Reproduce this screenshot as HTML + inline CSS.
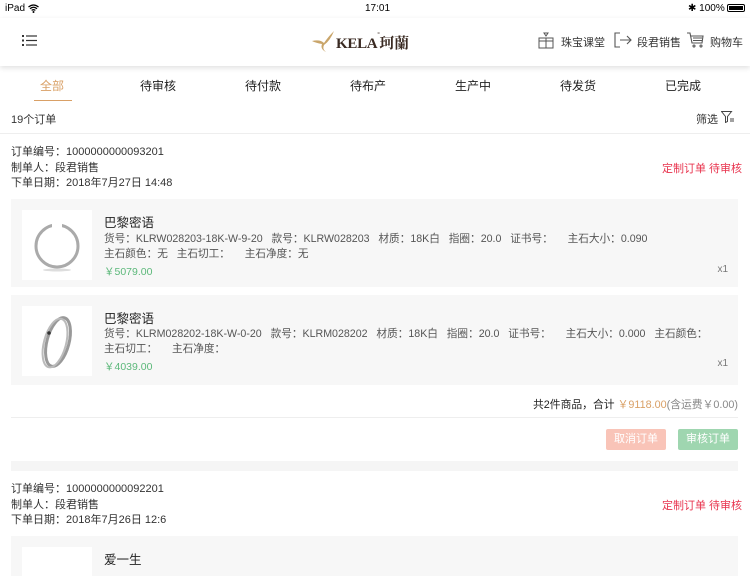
<!DOCTYPE html>
<html><head><meta charset="utf-8"><style>
*{margin:0;padding:0;box-sizing:border-box}
body{width:750px;height:563px;overflow:hidden;background:#fff;font-family:"Liberation Sans","Noto Sans CJK SC",sans-serif;color:#222;position:relative}
.a{position:absolute;white-space:nowrap}
.s{font-size:11px;color:#333}
.card{position:absolute;left:11px;width:727px;background:#f7f7f7}
.img{position:absolute;left:11px;top:11px;width:70px;height:70px;background:#fff}
.t{position:absolute;left:93px;font-size:12.5px;color:#222}
.d{position:absolute;left:93px;font-size:10.65px;color:#555}
.p{position:absolute;left:93px;font-size:10.5px;color:#5cb87a}
</style></head><body>
<div class="a" style="left:5px;top:3px;font-size:10px;color:#000">iPad</div>
<svg class="a" style="left:28px;top:4px" width="11" height="9" viewBox="0 0 11 9"><path d="M0.5 3Q5.5-1 10.5 3M2 4.7Q5.5 1.8 9 4.7M3.6 6.4Q5.5 5 7.4 6.4" stroke="#000" stroke-width="1.3" fill="none"/><circle cx="5.5" cy="8" r="1" fill="#000"/></svg>
<div class="a" style="left:365px;top:3px;font-size:10px;color:#000">17:01</div>
<div class="a" style="left:688px;top:3px;font-size:10px;color:#000">✱ 100%</div>
<div class="a" style="left:727px;top:4px;width:18px;height:8px;border:1px solid #000;border-radius:2px;padding:1px"><div style="width:100%;height:100%;background:#000"></div></div>
<div class="a" style="left:0;top:18px;width:750px;height:48px;background:#fff;box-shadow:0 2px 5px rgba(0,0,0,.12)"></div>
<svg class="a" style="left:22px;top:35px" width="15" height="11" viewBox="0 0 15 11"><g fill="#333"><rect x="0" y="0" width="2" height="2"/><rect x="0" y="4.5" width="2" height="2"/><rect x="0" y="9" width="2" height="2"/><rect x="4" y="0.4" width="11" height="1.2"/><rect x="4" y="4.9" width="11" height="1.2"/><rect x="4" y="9.4" width="11" height="1.2"/></g></svg>
<svg class="a" style="left:310px;top:29px" width="26" height="24" viewBox="0 0 26 24"><path d="M2 12Q10 10 14 14Q18 8 24 2Q20 12 14 16Q12 20 16 23Q10 20 12 15Q6 14 2 12Z" fill="#c9a56a"/></svg>
<div class="a" style="left:336px;top:32px;font-family:'Liberation Serif','Noto Serif CJK SC',serif;font-size:15px;color:#3a2a22;font-weight:bold;letter-spacing:-.3px">KELA<span style="font-size:6px;vertical-align:top">°</span>珂蘭</div>
<svg class="a" style="left:538px;top:32px" width="16" height="17" viewBox="0 0 16 17" fill="none" stroke="#555" stroke-width="1"><path d="M1 6h14v10H1zM8 6v10M1 9h14"/><path d="M6 1h4l-2 3z"/></svg>
<div class="a s" style="left:561px;top:34px">珠宝课堂</div>
<svg class="a" style="left:614px;top:32px" width="18" height="16" viewBox="0 0 18 16" fill="none" stroke="#555" stroke-width="1.1"><path d="M6 1H1v14h5M6 8h11M13 4l4 4-4 4"/></svg>
<div class="a s" style="left:637px;top:34px">段君销售</div>
<svg class="a" style="left:687px;top:32px" width="17" height="16" viewBox="0 0 17 16" fill="none" stroke="#555" stroke-width="1.1"><path d="M0 1h3l2 10h10l1-7H4M6 6h9M6 8.5h9"/><circle cx="7" cy="14" r="1"/><circle cx="14" cy="14" r="1"/></svg>
<div class="a s" style="left:710px;top:34px">购物车</div>

<div class="a" style="top:77px;left:40px;font-size:12px;color:#d9a066">全部</div>
<div class="a" style="left:34px;top:100px;width:38px;height:1px;background:#d9a066"></div>
<div class="a" style="top:77px;left:140px;font-size:12px">待审核</div>
<div class="a" style="top:77px;left:245px;font-size:12px">待付款</div>
<div class="a" style="top:77px;left:350px;font-size:12px">待布产</div>
<div class="a" style="top:77px;left:455px;font-size:12px">生产中</div>
<div class="a" style="top:77px;left:560px;font-size:12px">待发货</div>
<div class="a" style="top:77px;left:665px;font-size:12px">已完成</div>
<div class="a s" style="left:11px;top:111px">19个订单</div>
<div class="a s" style="left:696px;top:111px">筛选</div>
<svg class="a" style="left:721px;top:111px" width="14" height="12" viewBox="0 0 14 12" fill="none" stroke="#444" stroke-width="1"><path d="M0.5 0.5h10l-4 5v5l-2 1v-6z M9 8h4M9 10h4"/></svg>
<div class="a" style="left:0;top:133px;width:750px;height:1px;background:#eee"></div>

<div class="a s" style="left:11px;top:145px;line-height:15.5px">订单编号：1000000000093201<br>制单人：段君销售<br>下单日期：2018年7月27日 14:48</div>
<div class="a" style="left:662px;top:160px;font-size:11px;color:#e8344e">定制订单 待审核</div>

<div class="card" style="top:199px;height:88px">
<div class="img"><svg width="70" height="70" viewBox="0 0 70 70"><ellipse cx="35" cy="36" rx="21" ry="21" fill="none" stroke="#aaa" stroke-width="3"/><rect x="30" y="10" width="10" height="8" fill="#fff"/><ellipse cx="35" cy="60" rx="14" ry="1.5" fill="#ddd"/></svg></div>
<div class="t" style="top:13px">巴黎密语</div>
<div class="d" style="top:32px">货号：KLRW028203-18K-W-9-20&nbsp;&nbsp; 款号：KLRW028203&nbsp;&nbsp; 材质：18K白&nbsp;&nbsp; 指圈：20.0&nbsp;&nbsp; 证书号：&nbsp;&nbsp;&nbsp;&nbsp; 主石大小：0.090</div>
<div class="d" style="top:47px">主石颜色：无&nbsp;&nbsp; 主石切工：&nbsp;&nbsp;&nbsp;&nbsp; 主石净度：无</div>
<div class="p" style="top:65px">￥5079.00</div>
<div class="a" style="right:10px;top:65px;font-size:10px;color:#777">x1</div>
</div>

<div class="card" style="top:295px;height:90px">
<div class="img"><svg width="70" height="70" viewBox="0 0 70 70"><ellipse cx="36" cy="36" rx="11" ry="25" transform="rotate(15 36 36)" fill="none" stroke="#999" stroke-width="3"/><ellipse cx="33" cy="37" rx="11" ry="25" transform="rotate(15 33 37)" fill="none" stroke="#bbb" stroke-width="2"/><circle cx="27" cy="27" r="1.8" fill="#333"/></svg></div>
<div class="t" style="top:13px">巴黎密语</div>
<div class="d" style="top:31px">货号：KLRM028202-18K-W-0-20&nbsp;&nbsp; 款号：KLRM028202&nbsp;&nbsp; 材质：18K白&nbsp;&nbsp; 指圈：20.0&nbsp;&nbsp; 证书号：&nbsp;&nbsp;&nbsp;&nbsp; 主石大小：0.000&nbsp;&nbsp; 主石颜色：</div>
<div class="d" style="top:46px">主石切工：&nbsp;&nbsp;&nbsp;&nbsp; 主石净度：</div>
<div class="p" style="top:64px">￥4039.00</div>
<div class="a" style="right:10px;top:63px;font-size:10px;color:#777">x1</div>
</div>

<div class="a" style="right:12px;top:396px;font-size:10.8px;color:#222">共2件商品，合计 <span style="color:#d9a066">￥9118.00</span><span style="color:#888">(含运费￥0.00)</span></div>
<div class="a" style="left:11px;top:417px;width:727px;height:1px;background:#eee"></div>
<div class="a" style="left:606px;top:429px;width:60px;height:21px;background:#f9c4b8;border-radius:2px;color:#fff;font-size:11px;text-align:center;line-height:21px">取消订单</div>
<div class="a" style="left:678px;top:429px;width:60px;height:21px;background:#9fd6b0;border-radius:2px;color:#fff;font-size:11px;text-align:center;line-height:21px">审核订单</div>
<div class="a" style="left:11px;top:461px;width:727px;height:10px;background:#f5f5f5"></div>

<div class="a s" style="left:11px;top:482px;line-height:15.5px">订单编号：1000000000092201<br>制单人：段君销售<br>下单日期：2018年7月26日 12:6</div>
<div class="a" style="left:662px;top:497px;font-size:11px;color:#e8344e">定制订单 待审核</div>
<div class="card" style="top:536px;height:40px">
<div class="img" style="height:40px"></div>
<div class="t" style="top:13px">爱一生</div>
</div>
</body></html>
